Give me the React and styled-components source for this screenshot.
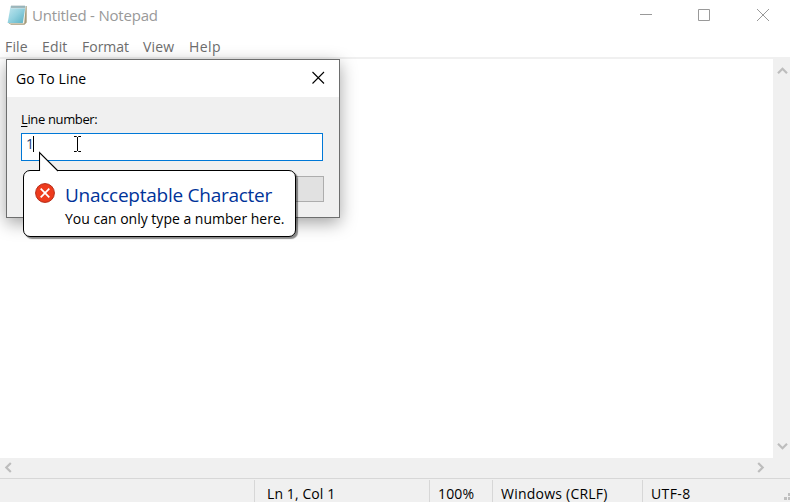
import React from 'react';
import styled, { createGlobalStyle } from 'styled-components';

const GlobalStyle = createGlobalStyle`
  * { box-sizing: border-box; }
  body { margin: 0; overflow: hidden; font-family: "Open Sans", "Noto Sans", sans-serif; }
`;

const Window = styled.div`
  position: relative;
  display: flex;
  flex-direction: column;
  width: 790px;
  height: 502px;
  overflow: hidden;
  background: #fff;
`;

const Label = styled.span`
  flex: none;
  white-space: nowrap;
  font-size: ${p => p.$size || 14}px;
  line-height: 20px;
  letter-spacing: ${p => p.$spacing || 0}px;
  color: ${p => p.$color || '#000'};
`;

const TitleBar = styled.header`
  display: flex;
  align-items: flex-start;
  height: 33px;
  padding: 4px 20px 0 7px;
`;

const AppTitle = styled(Label)`
  margin: 1px auto 0 4px;
`;

const Controls = styled.div`
  display: flex;
  padding-top: 5px;
`;

const MenuBar = styled.nav`
  display: flex;
  height: 24px;
  padding: 4px 0 0 5px;
`;

const MenuItem = styled(Label)`
  width: ${p => p.$width}px;
`;

const Workspace = styled.div`
  display: flex;
  height: 401px;
  border-top: 2px solid #f0f0f0;
`;

const Editor = styled.main`
  flex: 1;
  background: #fff;
`;

const VerticalScroll = styled.div`
  display: flex;
  flex-direction: column;
  justify-content: space-between;
  width: 17px;
  padding: 6px 0 6px 4px;
  background: #f0f0f0;
`;

const HorizontalScroll = styled.div`
  display: flex;
  justify-content: space-between;
  height: 20px;
  padding: 4px 24px 0 3px;
  background: #f0f0f0;
`;

const StatusBar = styled.footer`
  display: flex;
  height: 24px;
  padding-left: 254px;
  padding-top: 1px;
  border-top: 1px solid #d7d7d7;
  background: #f0f0f0;
`;

const StatusCell = styled.div`
  display: flex;
  width: ${p => p.$width}px;
  padding: 4px 0 0 ${p => p.$pad}px;
  border-left: 1px solid #d7d7d7;
`;

const Grip = styled.svg`
  margin: 12px 0 0 auto;
`;

const Dialog = styled.section`
  position: absolute;
  left: 6px;
  top: 59px;
  width: 334px;
  height: 159px;
  border: 1px solid #6d6e6e;
  background: #f0f0f0;
  box-shadow: 0 5px 16px rgba(0, 0, 0, 0.36);
`;

const DialogHeader = styled.div`
  display: flex;
  justify-content: space-between;
  height: 37px;
  padding: 9px 14px 0 9px;
  background: #fff;
`;

const DialogBody = styled.div`
  display: flex;
  flex-direction: column;
  padding: 12px 15px 0 14px;
`;

const FieldLabel = styled(Label)`
  height: 24px;
  u { text-underline-offset: 2px; }
`;

const Field = styled.div`
  display: flex;
  width: 302px;
  height: 28px;
  padding-left: 4px;
  border: 1px solid #0078d7;
  background: #fff;
`;

const Caret = styled.i`
  width: 1px;
  height: 16px;
  margin: 2px 0 0 -1px;
  background: #000;
`;

const IBeam = styled.svg`
  margin: 2px 0 0 39px;
`;

const DialogButton = styled.div`
  align-self: flex-end;
  width: 86px;
  height: 26px;
  margin: 15px 0 0 0;
  border: 1px solid #adadad;
  background: #e1e1e1;
`;

const Balloon = styled.aside`
  position: absolute;
  left: 23px;
  top: 170px;
  display: flex;
  width: 273px;
  height: 67px;
  padding: 12px 0 0 11px;
  border: 1px solid #000;
  border-radius: 7px;
  background: #fff;
  box-shadow: 2px 2px 1px rgba(0, 0, 0, 0.45);
`;

const BalloonTip = styled.svg`
  position: absolute;
  left: 15px;
  top: -20px;
`;

const BalloonText = styled.div`
  display: flex;
  flex-direction: column;
  margin-left: 9px;
`;

const BalloonTitle = styled(Label)`
  height: 26px;
  line-height: 24px;
`;

const chevrons = {
  up: 'M1 8.3 5.5 3.8 10 8.3',
  down: 'M1 2.7 5.5 7.2 10 2.7',
  left: 'M7.8 1 3.3 5.5 7.8 10',
  right: 'M3.2 1 7.7 5.5 3.2 10',
};

const Chevron = ({ dir }) => (
  <svg width="11" height="11" viewBox="0 0 11 11">
    <path d={chevrons[dir]} fill="none" stroke="#bdbdbd" strokeWidth="2.2" />
  </svg>
);

const NotepadIcon = () => (
  <svg width="21" height="22" viewBox="0 0 21 22">
    <defs>
      <linearGradient id="pad" x1="0" y1="0" x2="1" y2="1">
        <stop offset="0" stopColor="#c5e8ef" />
        <stop offset="0.5" stopColor="#92d1df" />
        <stop offset="1" stopColor="#58afc2" />
      </linearGradient>
    </defs>
    <path d="M5 2H19.7V18.5L17.5 20.7H4L1.5 19Z" fill="#a59a7a" />
    <path d="M4.5 2H18.8L17.2 19.6H3Z" fill="#f4f4ec" />
    <path d="M3.6 2H18.5L15.8 19H0.6Z" fill="url(#pad)" />
    <path d="M4 3.5H18" stroke="#d2e5e8" strokeWidth="2" />
    <path d="M5 1.5V4M7 1.5V4M9 1.5V4M11 1.5V4M13 1.5V4M15 1.5V4M17 1.5V4" stroke="#748b8f" />
  </svg>
);

export default function App() {
  return (
    <Window>
      <GlobalStyle />
      <TitleBar>
        <NotepadIcon />
        <AppTitle $size={15} $spacing={-0.2} $color="#999">Untitled - Notepad</AppTitle>
        <Controls>
          {/* The three buttons share one drawing so that their gaps stay even. */}
          <svg width="130" height="13" viewBox="0 0 130 13" fill="none" stroke="#999">
            <path d="M0 5.5H12M58.5 0.5H69.5V11.5H58.5ZM117 0 129 12M129 0 117 12" />
          </svg>
        </Controls>
      </TitleBar>
      <MenuBar>
        <MenuItem $width={37} $spacing={0.15} $color="#6d6d6d">File</MenuItem>
        <MenuItem $width={40} $spacing={0.15} $color="#6d6d6d">Edit</MenuItem>
        <MenuItem $width={61} $color="#6d6d6d">Format</MenuItem>
        <MenuItem $width={46} $spacing={0.2} $color="#6d6d6d">View</MenuItem>
        <MenuItem $width={40} $spacing={0.4} $color="#6d6d6d">Help</MenuItem>
      </MenuBar>
      <Workspace>
        <Editor />
        <VerticalScroll>
          <Chevron dir="up" />
          <Chevron dir="down" />
        </VerticalScroll>
      </Workspace>
      <HorizontalScroll>
        <Chevron dir="left" />
        <Chevron dir="right" />
      </HorizontalScroll>
      <StatusBar>
        <StatusCell $width={175} $pad={12}><Label $spacing={0.1}>Ln 1, Col 1</Label></StatusCell>
        <StatusCell $width={63} $pad={8}><Label $spacing={0.15}>100%</Label></StatusCell>
        <StatusCell $width={150} $pad={8}><Label $spacing={0.23}>Windows (CRLF)</Label></StatusCell>
        <StatusCell $width={100} $pad={8}><Label $spacing={0.4}>UTF-8</Label></StatusCell>
        <Grip width="6" height="10" viewBox="0 0 6 10" fill="#bfbfbf">
          <path d="M4 1H6V4H4ZM0 5H3V8H0ZM4 5H6V8H4Z" />
        </Grip>
      </StatusBar>
      <Dialog>
        <DialogHeader>
          <Label $spacing={0.1}>Go To Line</Label>
          <svg width="13" height="20" viewBox="0 0 13 20" fill="none" stroke="#000" strokeWidth="1.1">
            <path d="M0.5 3 12 14.5M12 3 0.5 14.5" />
          </svg>
        </DialogHeader>
        <DialogBody>
          <FieldLabel $size={13} $spacing={-0.36}><u>L</u>ine number:</FieldLabel>
          <Field>
            <Label $color="#163b75">1</Label>
            <Caret />
            <IBeam width="9" height="17" viewBox="0 0 9 17" fill="none" stroke="#000">
              <path d="M1 0.5H3.5L4.5 1.5L5.5 0.5H8M4.5 1V15M1 15.5H3.5L4.5 14.5L5.5 15.5H8" />
            </IBeam>
          </Field>
          <DialogButton />
        </DialogBody>
      </Dialog>
      <Balloon>
        <BalloonTip width="21" height="21" viewBox="0 0 21 21">
          <path d="M0.5 21V1.5L19.5 20.5V21Z" fill="#fff" />
          <path d="M0.5 20V1.5L19 20" fill="none" stroke="#000" strokeWidth="1.1" />
        </BalloonTip>
        <svg width="21" height="21" viewBox="0 0 21 21">
          <circle cx="10" cy="10" r="9.4" fill="#ee3b1d" stroke="#b52b17" />
          <path d="M5.7 5.7 14.3 14.3M14.3 5.7 5.7 14.3" stroke="#fff" strokeWidth="1.7" />
        </svg>
        <BalloonText>
          <BalloonTitle $size={19} $spacing={-0.26} $color="#003399">Unacceptable Character</BalloonTitle>
          <Label>You can only type a number here.</Label>
        </BalloonText>
      </Balloon>
    </Window>
  );
}
